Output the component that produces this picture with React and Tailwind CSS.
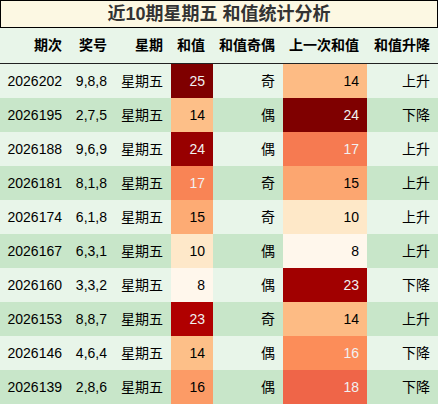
const rows = [
  { id: "2026202", nums: "9,8,8", sum: 25, parity: "奇", prev: 14, trend: "上升" },
  { id: "2026195", nums: "2,7,5", sum: 14, parity: "偶", prev: 24, trend: "下降" },
  { id: "2026188", nums: "9,6,9", sum: 24, parity: "偶", prev: 17, trend: "上升" },
  { id: "2026181", nums: "8,1,8", sum: 17, parity: "奇", prev: 15, trend: "上升" },
  { id: "2026174", nums: "6,1,8", sum: 15, parity: "奇", prev: 10, trend: "上升" },
  { id: "2026167", nums: "6,3,1", sum: 10, parity: "偶", prev: 8, trend: "上升" },
  { id: "2026160", nums: "3,3,2", sum: 8, parity: "偶", prev: 23, trend: "下降" },
  { id: "2026153", nums: "8,8,7", sum: 23, parity: "奇", prev: 14, trend: "上升" },
  { id: "2026146", nums: "4,6,4", sum: 14, parity: "偶", prev: 16, trend: "下降" },
  { id: "2026139", nums: "2,8,6", sum: 16, parity: "偶", prev: 18, trend: "下降" },
];

// OrRd-style fills, one scale per column
const sumColors = {
  25: ["bg-[#7f0000]", "text-[#f1f1f1]"],
  24: ["bg-[#980000]", "text-[#f1f1f1]"],
  23: ["bg-[#b00000]", "text-[#f1f1f1]"],
  17: ["bg-[#f98455]", "text-[#f1f1f1]"],
  16: ["bg-[#fc9b66]", "text-black"],
  15: ["bg-[#fdab74]", "text-black"],
  14: ["bg-[#fdbf88]", "text-black"],
  10: ["bg-[#fee8c9]", "text-black"],
  8: ["bg-[#fff7ec]", "text-black"],
};

const prevColors = {
  24: ["bg-[#7f0000]", "text-[#f1f1f1]"],
  23: ["bg-[#a10000]", "text-[#f1f1f1]"],
  18: ["bg-[#ef6548]", "text-[#f1f1f1]"],
  17: ["bg-[#f67a51]", "text-[#f1f1f1]"],
  16: ["bg-[#fc8d59]", "text-[#f1f1f1]"],
  15: ["bg-[#fca670]", "text-black"],
  14: ["bg-[#fdbb84]", "text-black"],
  10: ["bg-[#fee8c8]", "text-black"],
  8: ["bg-[#fff7ec]", "text-black"],
};

const cols = ["w-[70px]", "w-[45px]", "w-[56px]", "w-[42px]", "w-[70px]", "w-[84px]", "w-[71px]"];
const headers = ["期次", "奖号", "星期", "和值", "和值奇偶", "上一次和值", "和值升降"];

export default function App() {
  return (
    <div
      className="w-[438px] h-[405px] bg-white text-[14px] text-black"
      style={{ fontFamily: '"Liberation Sans", Arial, "Noto Sans CJK SC", sans-serif' }}
    >
      <div className="h-[28px] border border-black bg-[#fcf8e3] flex items-center justify-center">
        <span className="text-[18px] font-bold text-[#333] leading-none">
          近10期星期五 和值统计分析
        </span>
      </div>

      <div className="flex h-[36px] bg-[#e8f5e9] border-b border-[#222] font-bold">
        {headers.map((h, i) => (
          <div key={h} className={`${cols[i]} flex items-center justify-end pr-2`}>
            {h}
          </div>
        ))}
      </div>

      {rows.map((r, idx) => {
        const rowBg = idx % 2 === 0 ? "bg-[#e8f5e9]" : "bg-[#c8e6c9]";
        const [sBg, sText] = sumColors[r.sum];
        const [pBg, pText] = prevColors[r.prev];
        return (
          <div key={r.id} className={`flex h-[34px] ${rowBg}`}>
            <div className={`${cols[0]} flex items-center justify-end pr-2`}>{r.id}</div>
            <div className={`${cols[1]} flex items-center justify-end pr-2`}>{r.nums}</div>
            <div className={`${cols[2]} flex items-center justify-end pr-2`}>星期五</div>
            <div className={`${cols[3]} flex items-center justify-end pr-2 ${sBg} ${sText}`}>{r.sum}</div>
            <div className={`${cols[4]} flex items-center justify-end pr-2`}>{r.parity}</div>
            <div className={`${cols[5]} flex items-center justify-end pr-2 ${pBg} ${pText}`}>{r.prev}</div>
            <div className={`${cols[6]} flex items-center justify-end pr-2`}>{r.trend}</div>
          </div>
        );
      })}
    </div>
  );
}
